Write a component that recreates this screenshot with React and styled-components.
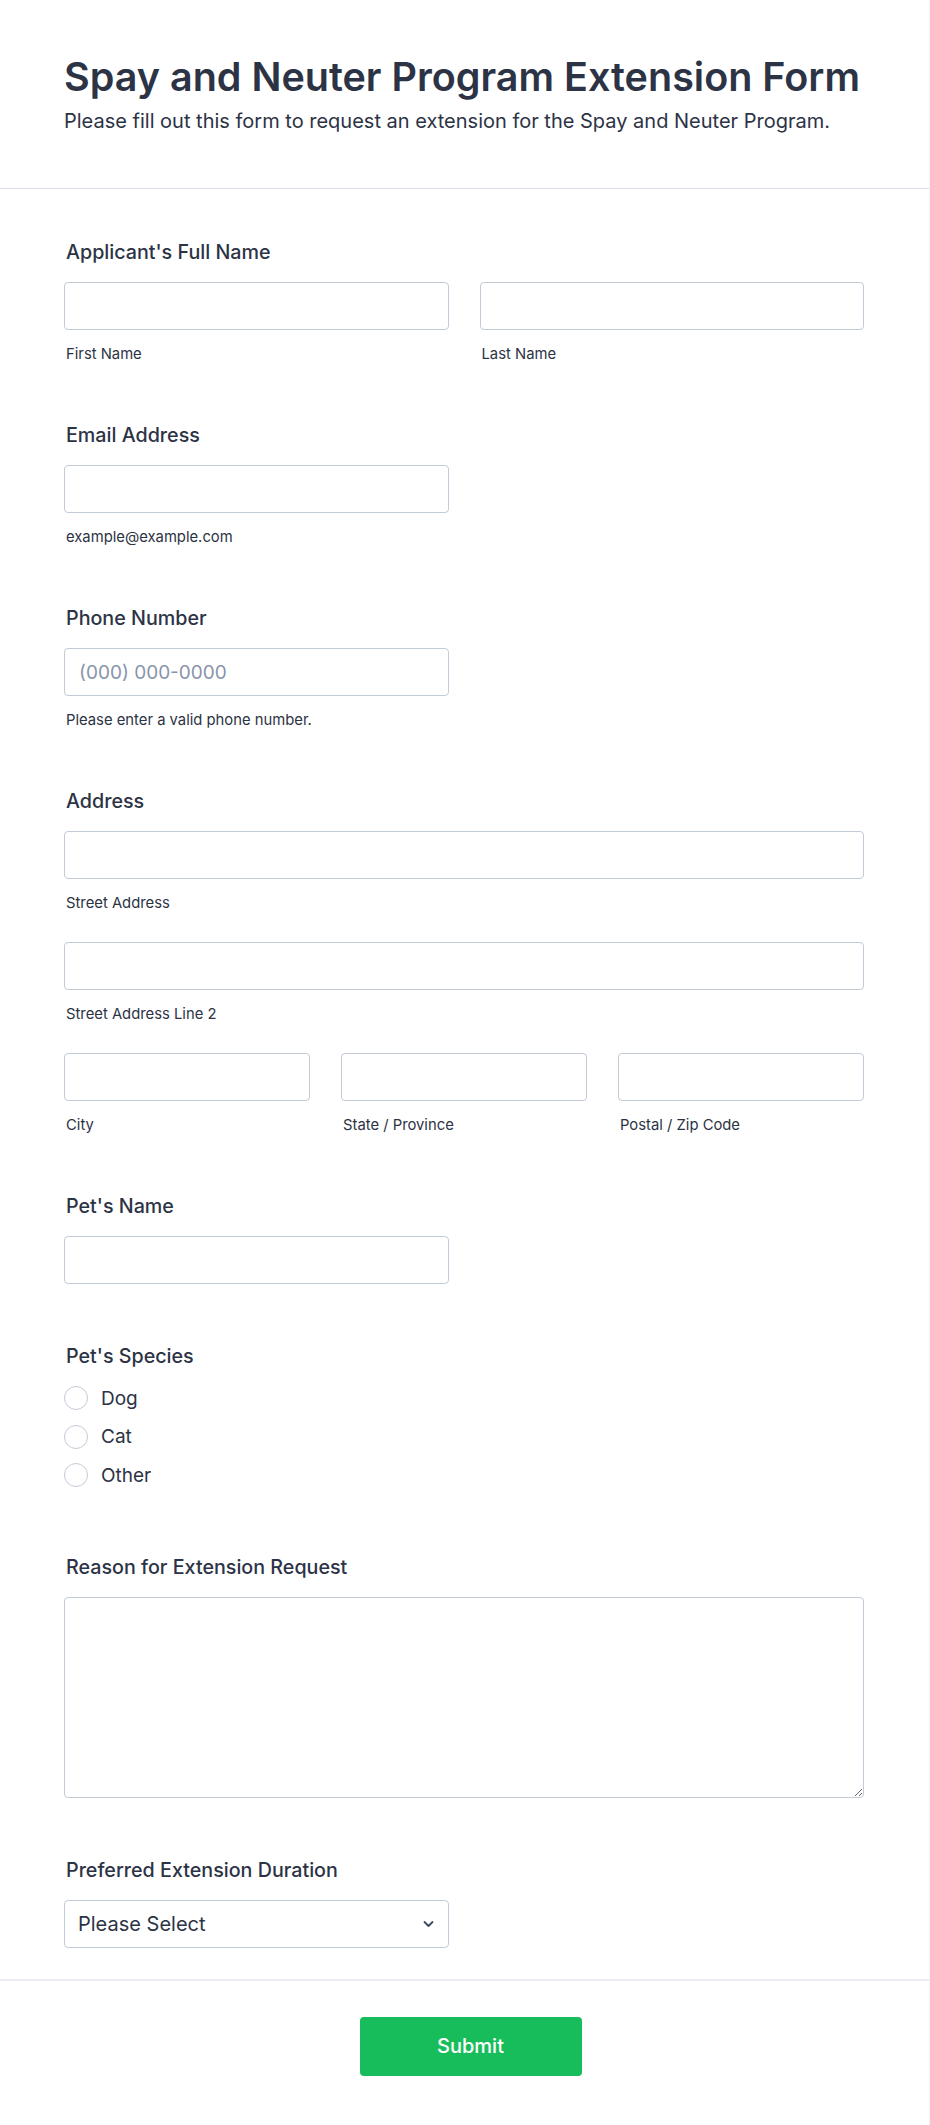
import React from 'react';
import styled, { createGlobalStyle } from 'styled-components';

const GlobalStyle = createGlobalStyle`
  * { box-sizing: border-box; }
  body {
    margin: 0;
    background: #fff;
    font-family: Inter, "Noto Sans", sans-serif;
    color: #2c3345;
  }
`;

const Page = styled.div`
  width: 930px;
  border-right: 1px solid #f3f3fc;
  border-bottom: 1px solid #f3f3fc;
`;

const Header = styled.header`
  padding: 54px 64px 53px;
  border-bottom: 1px solid #dcdcec;
`;

const Title = styled.h1`
  margin: 0;
  font-size: 39.5px;
  line-height: 46px;
  font-weight: 600;
  white-space: nowrap;
  color: #2c3345;
`;

const Subtitle = styled.p`
  margin: 7px 0 0;
  font-size: 20px;
  line-height: 28px;
`;

const Body = styled.main`
  display: flex;
  flex-direction: column;
  gap: 58px;
  padding: 49px 65px 31px 64px;
`;

const Field = styled.div`
  display: flex;
  flex-direction: column;
`;

const Label = styled.label`
  font-size: 19.7px;
  line-height: 28px;
  font-weight: 500;
  padding-left: 2px;
  margin-bottom: ${p => (p.$tight ? '9px' : '16px')};
`;

const Row = styled.div`
  display: grid;
  grid-template-columns: repeat(${p => p.$cols || 1}, 1fr);
  column-gap: 31px;
  & + & {
    margin-top: 30px;
  }
`;

const Cell = styled.div`
  display: flex;
  flex-direction: column;
  width: ${p => (p.$half ? 'calc((100% - 31px) / 2)' : 'auto')};
`;

const Input = styled.input`
  height: 48px;
  width: 100%;
  border: 1px solid #c3cad8;
  border-radius: 4px;
  padding: 0 14px;
  font-family: inherit;
  font-size: 19px;
  color: #2c3345;
  background: #fff;
  outline: none;
  &::placeholder {
    color: #8894ab;
  }
`;

const Sub = styled.span`
  margin-top: 15px;
  font-size: 14.8px;
  line-height: 18px;
  padding-left: 2px;
  color: #2c3345;
`;

const Options = styled.div`
  display: flex;
  flex-direction: column;
`;

const Option = styled.label`
  display: flex;
  align-items: center;
  gap: 13px;
  height: 38.5px;
  font-size: 19px;
`;

const Radio = styled.input.attrs({ type: 'radio' })`
  appearance: none;
  margin: 0;
  width: 24px;
  height: 24px;
  border-radius: 50%;
  border: 1.5px solid #c3cad8;
  background: #fff;
`;

const TextArea = styled.textarea`
  height: 201px;
  width: 100%;
  border: 1px solid #c3cad8;
  border-radius: 4px;
  font-family: inherit;
  font-size: 18px;
  padding: 10px 14px;
  outline: none;
`;

const SelectWrap = styled.div`
  position: relative;
  width: calc((100% - 31px) / 2);
`;

const Select = styled.select`
  appearance: none;
  height: 48px;
  width: 100%;
  border: 1px solid #c3cad8;
  border-radius: 4px;
  padding: 0 40px 0 13px;
  font-family: inherit;
  font-size: 20px;
  color: #2c3345;
  background: #fff;
  outline: none;
`;

const Chevron = styled.svg`
  position: absolute;
  right: 15px;
  top: 50%;
  transform: translateY(-50%);
  pointer-events: none;
`;

const Footer = styled.footer`
  display: flex;
  justify-content: center;
  padding: 36px 0 49px 12px;
  border-top: 2px solid #ececf3;
`;

const SubmitButton = styled.button`
  width: 222px;
  height: 59px;
  border: none;
  border-radius: 4px;
  background: #18bd5b;
  color: #fff;
  font-family: inherit;
  font-size: 20px;
  font-weight: 500;
`;

function TextField({ sub, placeholder, half }) {
  return (
    <Cell $half={half}>
      <Input type="text" placeholder={placeholder} />
      {sub && <Sub>{sub}</Sub>}
    </Cell>
  );
}

export default function App() {
  return (
    <Page>
      <GlobalStyle />
      <Header>
        <Title>Spay and Neuter Program Extension Form</Title>
        <Subtitle>Please fill out this form to request an extension for the Spay and Neuter Program.</Subtitle>
      </Header>
      <Body>
        <Field>
          <Label>Applicant's Full Name</Label>
          <Row $cols={2}>
            <TextField sub="First Name" />
            <TextField sub="Last Name" />
          </Row>
        </Field>

        <Field>
          <Label>Email Address</Label>
          <TextField half sub="example@example.com" />
        </Field>

        <Field>
          <Label>Phone Number</Label>
          <TextField half placeholder="(000) 000-0000" sub="Please enter a valid phone number." />
        </Field>

        <Field>
          <Label>Address</Label>
          <Row>
            <TextField sub="Street Address" />
          </Row>
          <Row>
            <TextField sub="Street Address Line 2" />
          </Row>
          <Row $cols={3}>
            <TextField sub="City" />
            <TextField sub="State / Province" />
            <TextField sub="Postal / Zip Code" />
          </Row>
        </Field>

        <Field>
          <Label>Pet's Name</Label>
          <TextField half />
        </Field>

        <Field>
          <Label $tight>Pet's Species</Label>
          <Options>
            {['Dog', 'Cat', 'Other'].map(o => (
              <Option key={o}>
                <Radio name="species" value={o} />
                {o}
              </Option>
            ))}
          </Options>
        </Field>

        <Field>
          <Label>Reason for Extension Request</Label>
          <TextArea />
        </Field>

        <Field>
          <Label>Preferred Extension Duration</Label>
          <SelectWrap>
            <Select defaultValue="">
              <option value="">Please Select</option>
            </Select>
            <Chevron width="11" height="7" viewBox="0 0 11 7">
              <polyline points="1.5 1.5 5.5 5.5 9.5 1.5" fill="none" stroke="#3e4a5f" strokeWidth="1.8" strokeLinecap="round" strokeLinejoin="round" />
            </Chevron>
          </SelectWrap>
        </Field>
      </Body>
      <Footer>
        <SubmitButton type="button">Submit</SubmitButton>
      </Footer>
    </Page>
  );
}
